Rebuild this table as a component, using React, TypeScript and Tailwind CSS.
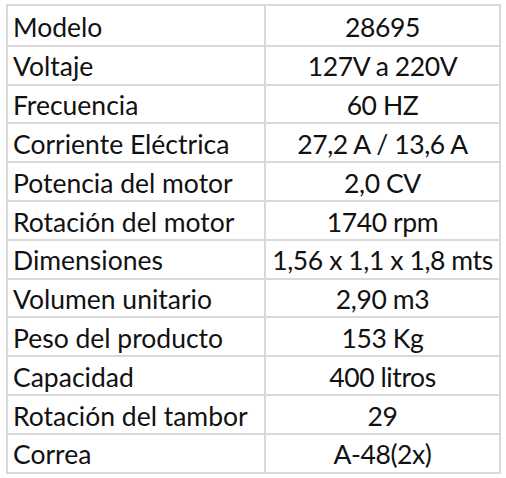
const specs: [string, string][] = [
  ['Modelo', '28695'],
  ['Voltaje', '127V a 220V'],
  ['Frecuencia', '60 HZ'],
  ['Corriente Eléctrica', '27,2 A / 13,6 A'],
  ['Potencia del motor', '2,0 CV'],
  ['Rotación del motor', '1740 rpm'],
  ['Dimensiones', '1,56 x 1,1 x 1,8 mts'],
  ['Volumen unitario', '2,90 m3'],
  ['Peso del producto', '153 Kg'],
  ['Capacidad', '400 litros'],
  ['Rotación del tambor', '29'],
  ['Correa', 'A-48(2x)'],
];

export default function App() {
  return (
    <div className="h-[478px] w-[506px] bg-white pl-[6px] pt-[4px] font-['Lato',sans-serif] text-[#111]">
      <div className="grid w-[495px] grid-cols-[258px_1fr] grid-rows-[repeat(12,38.8px)] border-2 border-[#d9d9d9]">
        {specs.map(([label, value], i) => (
          <div key={label} className="contents">
            <div
              className={`flex items-center border-r-2 border-[#d9d9d9] pl-[5px] pt-[3px] text-[26.5px] leading-none whitespace-nowrap ${
                i > 0 ? 'border-t-2' : ''
              }`}
            >
              {label}
            </div>
            <div
              className={`flex items-center justify-center border-[#d9d9d9] pt-[3px] text-[26.5px] leading-none tracking-[-0.4px] whitespace-nowrap ${
                i > 0 ? 'border-t-2' : ''
              }`}
            >
              {value}
            </div>
          </div>
        ))}
      </div>
    </div>
  );
}
